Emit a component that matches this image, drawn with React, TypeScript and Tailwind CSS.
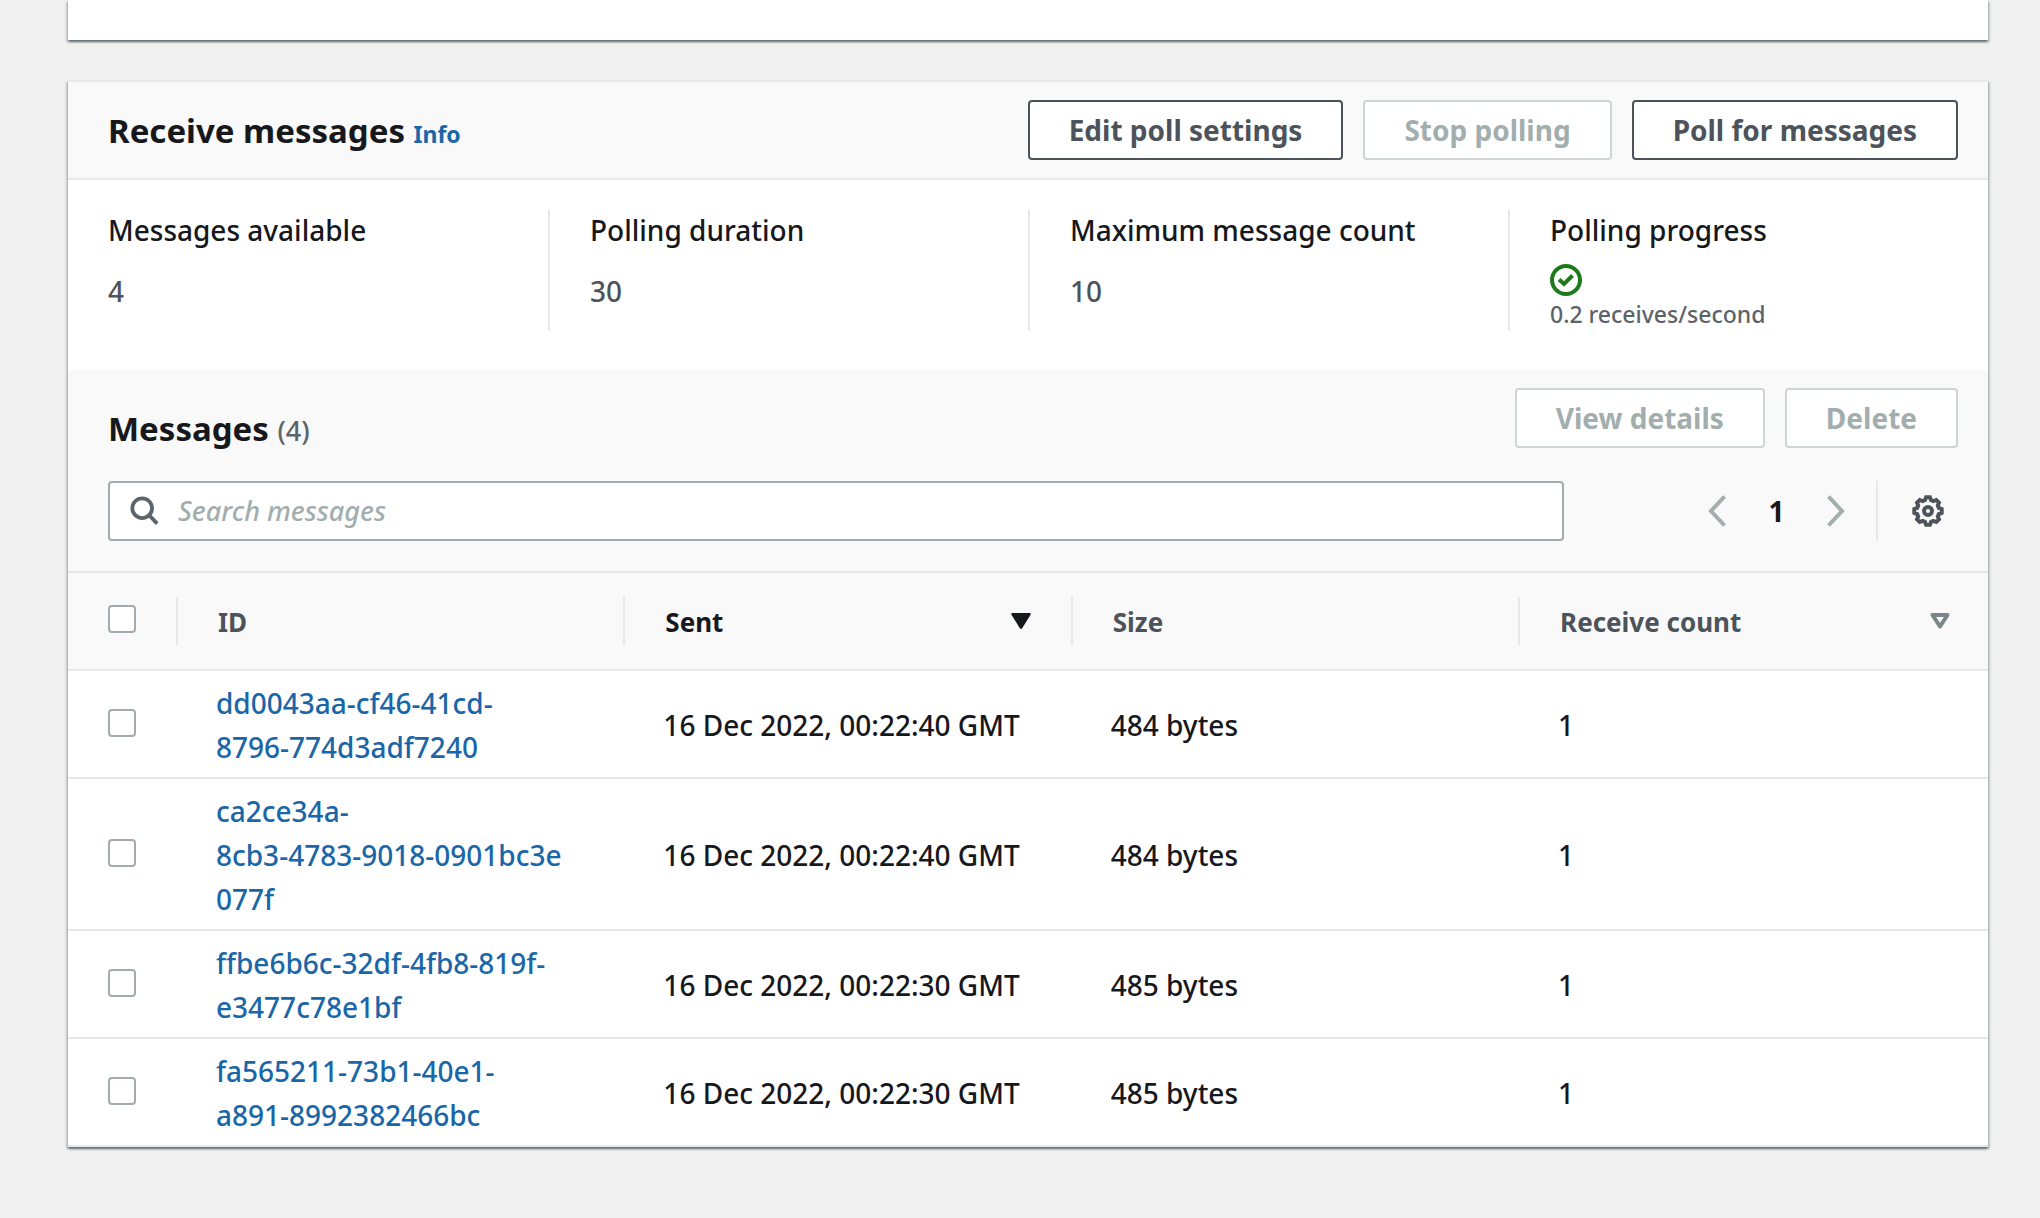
import type { ReactNode } from "react";

const messages = [
  { id: ["dd0043aa-cf46-41cd-", "8796-774d3adf7240"], sent: "16 Dec 2022, 00:22:40 GMT", size: "484 bytes", count: 1 },
  { id: ["ca2ce34a-", "8cb3-4783-9018-0901bc3e", "077f"], sent: "16 Dec 2022, 00:22:40 GMT", size: "484 bytes", count: 1 },
  { id: ["ffbe6b6c-32df-4fb8-819f-", "e3477c78e1bf"], sent: "16 Dec 2022, 00:22:30 GMT", size: "485 bytes", count: 1 },
  { id: ["fa565211-73b1-40e1-", "a891-8992382466bc"], sent: "16 Dec 2022, 00:22:30 GMT", size: "485 bytes", count: 1 },
];

const cardClass =
  "bg-white shadow-[0_2px_2px_0_rgba(0,28,36,0.45),2px_2px_2px_0_rgba(0,28,36,0.15),-2px_2px_2px_0_rgba(0,28,36,0.15)]";

function Button({ children, disabled = false }: { children: ReactNode; disabled?: boolean }) {
  return (
    <button
      type="button"
      disabled={disabled}
      className="h-15 shrink-0 rounded-[4px] border-2 border-[#4d535a] bg-white px-[39px] text-[28px] leading-10 font-bold whitespace-nowrap text-[#4d535a] disabled:border-[#cfd4d4] disabled:text-[#a2aeae]"
    >
      {children}
    </button>
  );
}

function Checkbox({ label }: { label: string }) {
  return (
    <input
      type="checkbox"
      aria-label={label}
      className="block size-7 appearance-none rounded-[4px] border-2 border-[#a2abad] bg-white checked:bg-[#1966a8]"
    />
  );
}

function Stat({ label, first = false, children }: { label: string; first?: boolean; children: ReactNode }) {
  return (
    <div className={first ? "h-30 pl-10" : "h-30 border-l-2 border-[#e7e8e9] pl-10"}>
      <dt className="text-[28px] leading-10 font-medium text-[#17181c]">{label}</dt>
      <dd className="text-[28px] font-medium text-[#4d535a]">{children}</dd>
    </div>
  );
}

function HeaderCell({ children }: { children: ReactNode }) {
  return (
    <th scope="col" className="py-6 pr-0 pl-0 text-left text-[26px] font-bold">
      {children}
    </th>
  );
}

export default function App() {
  return (
    <div className="min-h-screen bg-[#f0f0f0] pr-[52px] pb-[69px] pl-[68px] font-['Noto_Sans','Open_Sans',sans-serif] text-[28px] text-[#17181c]">
      <section className={`${cardClass} h-10`} />

      <section className={`${cardClass} mt-10 border-t-2 border-[#e7e8e9]`}>
        <header className="flex items-center justify-between border-b-2 border-[#e7e8e9] bg-[#f9f9f9] py-[18px] pr-[30px] pl-10">
          <h2 className="pt-1 text-[33px] leading-11 font-bold">
            Receive messages{" "}
            <a href="#info" className="text-[23px] text-[#1966a8]">
              Info
            </a>
          </h2>
          <div className="flex gap-5">
            <Button>Edit poll settings</Button>
            <Button disabled>Stop polling</Button>
            <Button>Poll for messages</Button>
          </div>
        </header>

        <dl className="grid grid-cols-4 pt-[30px] pb-10">
          <Stat label="Messages available" first>
            <span className="block pt-[19px] leading-11">4</span>
          </Stat>
          <Stat label="Polling duration">
            <span className="block pt-[19px] leading-11">30</span>
          </Stat>
          <Stat label="Maximum message count">
            <span className="block pt-[19px] leading-11">10</span>
          </Stat>
          <Stat label="Polling progress">
            <svg viewBox="0 0 32 32" className="mt-3.5 block size-8" fill="none" stroke="#1f7a1c" strokeWidth="4" role="img" aria-label="Success">
              <circle cx="16" cy="16" r="14" />
              <path d="M9 15.5l5 4.5 8.5-8.5" />
            </svg>
            <span className="block text-[23px] leading-9 text-[#5c646b]">0.2 receives/second</span>
          </Stat>
        </dl>

        <div className="border-b-2 border-[#e7e8e9] bg-[#f9f9f9] pt-[18px] pr-[30px] pb-[30px] pl-10">
          <div className="flex justify-between">
            <h2 className="pt-[19px] text-[33px] leading-11 font-bold">
              Messages <span className="text-[27px] font-medium text-[#5c646b]">(4)</span>
            </h2>
            <div className="flex gap-5">
              <Button disabled>View details</Button>
              <Button disabled>Delete</Button>
            </div>
          </div>

          <div className="mt-7 flex items-center">
            <label className="flex h-15 min-w-0 grow items-center rounded-[4px] border-2 border-[#a2abad] bg-white pl-5">
              <svg viewBox="0 0 32 32" className="size-[30px] shrink-0" fill="none" stroke="#5c646b" strokeWidth="4">
                <circle cx="13" cy="13" r="10.5" />
                <path d="M20.5 20.5l8.5 9" />
              </svg>
              <input
                type="text"
                aria-label="Search messages"
                placeholder="Search messages"
                className="min-w-0 grow bg-transparent pl-[18px] text-[27px] font-medium outline-none placeholder:text-[#a2aeae] placeholder:italic"
              />
            </label>
            <nav aria-label="Pagination" className="ml-36 flex shrink-0 items-center">
              <button type="button" aria-label="Previous page" className="text-[#a2aeae]">
                <svg viewBox="0 0 18 32" className="h-8 w-[18px]" fill="none" stroke="currentColor" strokeWidth="4">
                  <path d="M16.5 1.5L3 16l13.500 14.500" />
                </svg>
              </button>
              <button type="button" aria-current="page" className="w-[101px] text-center font-bold">
                1
              </button>
              <button type="button" aria-label="Next page" className="text-[#a2aeae]">
                <svg viewBox="0 0 18 32" className="h-8 w-[18px]" fill="none" stroke="currentColor" strokeWidth="4">
                  <path d="M1.500 1.500L15 16L1.500 30.500" />
                </svg>
              </button>
            </nav>
            <div className="ml-[31px] flex h-15 shrink-0 items-center border-l-2 border-[#e7e8e9] pr-3.5 pl-[34px]">
              <button type="button" aria-label="Preferences" className="text-[#4d535a]">
                <svg viewBox="0 0 32 32" className="size-8" fill="none" stroke="currentColor" strokeWidth="4">
                  <path d="M14.100 2.300H17.900L19.100 5.200L21.400 6.200L24.300 5L27 7.700L25.800 10.600L26.800 12.900L29.700 14.100V17.900L26.800 19.100L25.800 21.400L27 24.300L24.300 27L21.400 25.800L19.100 26.800L17.900 29.700H14.100L12.900 26.800L10.600 25.800L7.700 27L5 24.300L6.200 21.400L5.200 19.100L2.300 17.900V14.100L5.200 12.900L6.200 10.600L5 7.700L7.700 5L10.600 6.200L12.900 5.200Z" />
                  <circle cx="16" cy="16" r="4" />
                </svg>
              </button>
            </div>
          </div>
        </div>

        <table className="w-full table-fixed border-collapse">
          <colgroup>
            <col className="w-[110px]" />
            <col className="w-[23.3%]" />
            <col className="w-[23.3%]" />
            <col className="w-[23.3%]" />
            <col />
          </colgroup>
          <thead>
            <tr className="border-b-2 border-[#e7e8e9] bg-[#f9f9f9] text-[#4d535a]">
              <HeaderCell>
                <div className="flex h-12 items-center border-r-2 border-[#e7e8e9] pb-1 pl-10">
                  <Checkbox label="Select all messages" />
                </div>
              </HeaderCell>
              <HeaderCell>
                <div className="flex h-12 items-center border-r-2 border-[#e7e8e9] px-10 pt-0.5">ID</div>
              </HeaderCell>
              <HeaderCell>
                <div className="flex h-12 items-center justify-between border-r-2 border-[#e7e8e9] px-10 text-[#17181c]">
                  <span className="pt-0.5">Sent</span>
                  <svg viewBox="0 0 20 16" className="h-4 w-5" fill="currentColor">
                    <path d="M1 0H19L20 1L11 15.500L10 16L9 15.500L0 1Z" />
                  </svg>
                </div>
              </HeaderCell>
              <HeaderCell>
                <div className="flex h-12 items-center border-r-2 border-[#e7e8e9] px-10 pt-0.5">Size</div>
              </HeaderCell>
              <HeaderCell>
                <div className="flex h-12 items-center justify-between pr-[38px] pl-10">
                  <span className="pt-0.5">Receive count</span>
                  <svg viewBox="0 0 20 16" className="h-4 w-5" fill="none" stroke="#7a8687" strokeWidth="4" strokeLinejoin="round">
                    <path d="M2.500 2H17.500L10 13.500Z" />
                  </svg>
                </div>
              </HeaderCell>
            </tr>
          </thead>
          <tbody>
            {messages.map((m) => (
              <tr key={m.id.join("")} className="border-b-2 border-[#e7e8e9] leading-11 font-medium">
                <td className="pb-0.5 pl-10">
                  <Checkbox label={`Select message ${m.id.join("")}`} />
                </td>
                <td className="pt-2.5 pr-9 pb-2 pl-[38px]">
                  <a href="#message" className="text-[#1966a8]">
                    {m.id.map((part) => (
                      <span key={part} className="block whitespace-nowrap">
                        {part}
                      </span>
                    ))}
                  </a>
                </td>
                <td className="px-[38px] pt-0.5 whitespace-nowrap">{m.sent}</td>
                <td className="px-[38px] pt-0.5">{m.size}</td>
                <td className="px-[38px] pt-0.5">{m.count}</td>
              </tr>
            ))}
          </tbody>
        </table>
      </section>
    </div>
  );
}
